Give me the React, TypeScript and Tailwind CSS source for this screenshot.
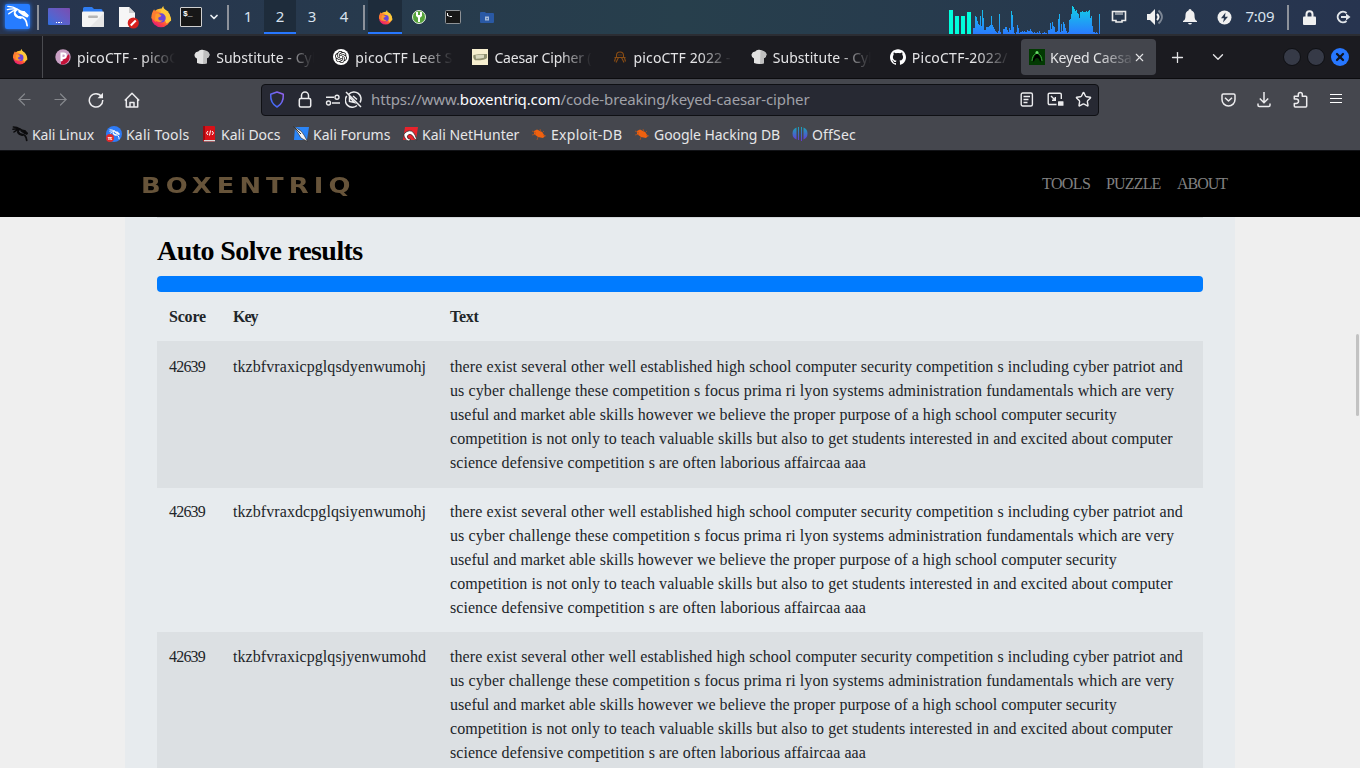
import React, { useLayoutEffect, useRef, useState } from "react";
import { SiGithub, SiOpenai } from "react-icons/si";
import { ArrowLeft, ArrowRight, Star, Plus, ChevronDown, X } from "lucide-react";

/** One line of text whose letter spacing is adjusted so that it spans `w` pixels. */
function Fit({ w, className = "", children }: { w: number; className?: string; children: React.ReactNode }) {
  const ref = useRef<HTMLSpanElement>(null);
  const [ls, setLs] = useState(0);
  useLayoutEffect(() => {
    const el = ref.current;
    if (!el) return;
    const n = (el.textContent || "").length;
    setLs((w - el.offsetWidth) / n);
  }, [w]);
  return (
    <span className="block overflow-visible" style={{ width: w }}>
      <span ref={ref} className={"inline-block whitespace-nowrap " + className} style={{ letterSpacing: ls }}>
        {children}
      </span>
    </span>
  );
}

const Firefox = ({ size }: { size: number }) => (
  <svg width={size} height={size} viewBox="0 0 24 24">
    <defs>
      <linearGradient id="fx" x1="0.85" y1="0.05" x2="0.2" y2="0.95">
        <stop offset="0" stopColor="#ffe940" />
        <stop offset="0.4" stopColor="#ff9a2c" />
        <stop offset="0.7" stopColor="#ff4a3d" />
        <stop offset="1" stopColor="#e3187c" />
      </linearGradient>
    </defs>
    <circle cx="12" cy="13" r="10.2" fill="url(#fx)" />
    <path d="M14.5 0c0 3 2.500 4 4.500 6.500S23.500 12 23 16l-5 3-6-12c0-3 1-5.500 2.500-7z" fill="#ffc83a" />
    <path d="M4.500 3.500C5 6 7 6 10 6.500l3 5-7 6L1.500 13c0-4 1-6.500 3-9.500z" fill="#ff7c30" />
    <circle cx="12.200" cy="13" r="5" fill="#6b45d8" />
    <path d="M6 9c2-1.500 4-.5 6.500 1.500-1 1.500-3 1.200-3.500 2.500-.4 2 2 3.500 5 2.500-2 3-7 2.500-8.500-1z" fill="#ff9a2c" />
  </svg>
);

const Dragon = ({ size, color, weight = 1.5 }: { size: number; color: string; weight?: number }) => (
  <svg width={size} height={size} viewBox="0 0 25 25" fill="none" stroke={color} strokeWidth={weight} strokeLinecap="round" strokeLinejoin="round">
    <path d="M2 1.500Q8 1.500 12 4.500T20 7.500M1.500 5Q7 3.500 12 4.800M3 9.500Q7 6 12 5" />
    <path d="M12 4.800C7.500 8 9 13 15 13s7.500 4 8 9.500" strokeWidth={weight * 1.25} />
    <path d="M14 7.200L20 7.500 24 11.500l-1 1.300-4-1.800z" fill={color} />
    <path d="M10 10q2 3.500 6 4" strokeWidth={weight * 1.5} />
  </svg>
);

const Cell = ({ className, children }: { className: string; children?: React.ReactNode }) => (
  <div className={"flex h-full shrink-0 items-center justify-center " + className}>{children}</div>
);
const Sep = () => <div className="h-[25px] w-[2px] bg-[#8d929b]" />;

const bars = [
  6, 6, 18, 17, 13, 10, 9, 18, 8, 24, 16, 4, 4, 7, 7, 7, 8, 9, 18, 9, 7, 5, 3, 2, 1, 3, 20, 2, 0, 0, 5, 5, 7, 7, 4, 2,
  6, 4, 23, 19, 7, 1, 0, 2, 9, 6, 1, 2, 2, 3, 2, 3, 2, 2, 4, 3, 3, 5, 3, 2, 1, 2, 1, 1, 2, 1, 3, 1, 0, 1, 1, 2, 1, 1, 0, 4, 4,
];
const busy = [
  11, 5, 12, 8, 7, 2, 2, 3, 15, 20, 2, 10, 3, 12, 10, 6, 3, 1, 2, 14, 15, 20, 28, 27, 25, 23, 24, 21, 20, 16, 22, 22, 23,
  22, 22, 22, 23, 22, 23, 24, 16, 18, 8, 2, 2, 1, 2, 1, 0, 20, 0,
];

function Monitor() {
  return (
    <svg width="152" height="34" viewBox="0 0 152 34" shapeRendering="crispEdges">
      <defs>
        <linearGradient id="mon" gradientUnits="userSpaceOnUse" x1="0" y1="34" x2="0" y2="6">
          <stop offset="0" stopColor="#2a7bff" />
          <stop offset="1" stopColor="#12d0e6" />
        </linearGradient>
      </defs>
      <g fill="#00ffdc">
        <rect x="0" y="10" width="4" height="24" />
        <rect x="6" y="16" width="4" height="18" />
        <rect x="12" y="16" width="4" height="18" />
        <rect x="18" y="12" width="4" height="22" />
      </g>
      <g fill="url(#mon)">
        <path d={bars.map((h, i) => `M${24 + i} 34v${-h}h1v${h}z`).join("") + busy.map((h, i) => `M${101 + i} 34v${-h}h1v${h}z`).join("")} />
      </g>
    </svg>
  );
}

function Panel() {
  return (
    <div className="flex h-[34px] items-center bg-linear-to-r from-[#27344e] via-[#273f4c] to-[#27344f] text-[15px] text-[#d8e2ee]">
      <Cell className="w-[34px] pb-px">
        <div className="flex size-[25px] items-center justify-center rounded-[2px] bg-[#267cff] shadow-[0_0_4px_#267cff]">
          <Dragon size={23} color="#fff" />
        </div>
      </Cell>
      <Cell className="w-2"><Sep /></Cell>
      <Cell className="w-[34px] pb-px">
        <div className="flex h-[17px] w-[22px] items-end justify-center gap-px rounded-[1px] bg-linear-to-tr from-[#2b6fe0] to-[#7a4cb0] pb-[2px]">
          <i className="size-[1.5px] bg-white" /><i className="size-[1.5px] bg-white" /><i className="size-[1.5px] bg-white" />
        </div>
      </Cell>
      <Cell className="w-[34px]">
        <svg width="22" height="20" viewBox="0 0 22 20">
          <path d="M1 7V1.500Q1 0 2.500 0H10l2 2h7q1.500 0 1.500 1.500V7z" fill="#2f7cf0" />
          <rect y="4.500" width="22" height="15.500" rx="1" fill="#f4f4f4" />
          <path d="M8 20L22 6v13q0 1-1 1z" fill="#e6e6e6" />
          <rect x="6" y="8.500" width="10" height="2.500" rx="1.200" fill="#b5b5b5" />
        </svg>
      </Cell>
      <Cell className="w-[34px]">
        <svg width="21" height="23" viewBox="0 0 21 23" className="ml-[2px]">
          <path d="M1 1h10l6 6v14H1z" fill="#f6f6f6" />
          <path d="M11 1v6h6z" fill="#cfcfcf" />
          <circle cx="15.300" cy="17" r="5.600" fill="#d7201d" />
          <path d="M12.800 19.500l5-5" stroke="#fff" strokeWidth="2" />
        </svg>
      </Cell>
      <Cell className="w-[34px]"><Firefox size={22} /></Cell>
      <Cell className="w-[26px]">
        <div className="h-[20px] w-[22px] rounded-[1px] border border-[#d0d0d0] bg-[#171717] pl-[2px] font-['Liberation_Mono'] text-[8px] leading-[11px] font-bold text-white">$_</div>
      </Cell>
      <Cell className="w-5"><ChevronDown size={12} strokeWidth={3.5} color="#e9edf2" /></Cell>
      <Cell className="w-2"><Sep /></Cell>
      <Cell className="w-8 pb-[2px]">1</Cell>
      <Cell className="w-8 border-b-2 border-[#2777ff] bg-[#1e2c3b]">2</Cell>
      <Cell className="w-8 pb-[2px]">3</Cell>
      <Cell className="w-8 pb-[2px]">4</Cell>
      <Cell className="w-2"><Sep /></Cell>
      <Cell className="w-[34px] border-b-2 border-[#2777ff] bg-[#1e2c3b] pt-[2px]"><Firefox size={15} /></Cell>
      <Cell className="w-[34px]">
        <svg width="14" height="14" viewBox="0 0 14 14">
          <circle cx="7" cy="7" r="6.500" fill="#56a43a" stroke="#e6efe2" />
          <path d="M4 2h2v3h2V2h2v4L8 7.800V12H6V7.800L4 6z" fill="#fff" />
        </svg>
      </Cell>
      <Cell className="w-[34px]">
        <svg width="16" height="14" viewBox="0 0 16 14">
          <rect x=".5" y=".5" width="15" height="13" rx="1" fill="#171717" stroke="#8e9296" />
          <path d="M2.500 3v3M3 5.500l1.500 1M5 6.500h2" stroke="#fff" />
        </svg>
      </Cell>
      <Cell className="w-[34px]">
        <svg width="14" height="11" viewBox="0 0 14 11">
          <path d="M0 1Q0 0 1 0h4l1 1h7q1 0 1 1v8q0 1-1 1H1q-1 0-1-1z" fill="#2a59a4" />
          <rect x="5" y="4.500" width="4" height="4" fill="#a8bcd8" />
          <rect x="6.500" y="6" width="1.200" height="1.200" fill="#2a59a4" />
        </svg>
      </Cell>
      <div className="flex-1" />
      <Monitor />
      <Cell className="w-9">
        <svg width="16" height="14" viewBox="0 0 16 14" fill="none" stroke="#ececec" strokeWidth="1.600">
          <path d="M1.500 1.500h13v9h-3.500v1.500H5v-1.500H1.500z" />
          <path d="M5 2v3M7 2v3M9 2v3M11 2v3" strokeWidth="1" />
        </svg>
      </Cell>
      <Cell className="w-9">
        <svg width="18" height="18" viewBox="0 0 18 18">
          <path d="M1 6h3l5-5v16l-5-5H1z" fill="#f0f0f0" />
          <path d="M11 6q3 3 0 6" stroke="#f0f0f0" strokeWidth="2" fill="none" />
          <path d="M12.500 2.500q7 6.500 0 13" stroke="#7d8795" strokeWidth="1.800" fill="none" />
        </svg>
      </Cell>
      <Cell className="w-[34px]">
        <svg width="14" height="16" viewBox="0 0 14 16" fill="#f0f0f0">
          <path d="M7 0q1.500 0 1.500 1.500Q11.500 2.500 11.500 6c0 3.500.5 5 2.500 6v1H0v-1c2-1 2.500-2.500 2.500-6Q2.500 2.500 5.500 1.500 5.500 0 7 0z" />
          <path d="M5 14h4q-.5 1.500-2 1.500T5 14z" />
        </svg>
      </Cell>
      <Cell className="w-[34px]">
        <svg width="15" height="15" viewBox="0 0 15 15">
          <circle cx="7.500" cy="7.500" r="7" fill="#f0f0f0" />
          <path d="M8.500 2.500L4 8.200h3L6 12.500l5-5.800H8z" fill="#27364e" />
        </svg>
      </Cell>
      <Cell className="w-[38px] pb-[2px]"><Fit w={29}>7:09</Fit></Cell>
      <Cell className="w-[18px]"><Sep /></Cell>
      <Cell className="w-6">
        <svg width="13" height="15" viewBox="0 0 13 15">
          <path d="M3.500 7V4.200a3 3 0 0 1 6 0V7" fill="none" stroke="#f0f0f0" strokeWidth="2" />
          <rect y="6.500" width="13" height="8.500" rx="1" fill="#f0f0f0" />
        </svg>
      </Cell>
      <Cell className="ml-[5px] w-[34px]">
        <svg width="15" height="14" viewBox="0 0 15 14" fill="none" stroke="#e2e6ea" strokeWidth="2">
          <path d="M10.500 3a5.300 5.300 0 1 0 0 8" />
          <path d="M5 7h6" />
          <path d="M10 3.500L14.500 7 10 10.500z" fill="#e2e6ea" stroke="none" />
        </svg>
      </Cell>
    </div>
  );
}

const Chef = () => (
  <svg width="16" height="16" viewBox="0 0 16 16">
    <path d="M3 14V9.500Q.3 8.500.5 5.500 1.500 2.500 4.200 2.600 5.500.5 8 .7q2.500-.2 3.700 2 3-.2 3.800 2.500.2 3-2.700 4v5q-4.800 1.500-9.800-.2z" fill="#e2e2e2" />
    <path d="M9.500 1.200q5 .3 6 3.800 0 3-2.500 4.200v5l-4 .8z" fill="#bfbfbf" />
  </svg>
);

const tabs = [
  {
    label: "picoCTF - picoCTF", w: 116, icon: (
      <svg width="16" height="16" viewBox="0 0 16 16">
        <circle cx="8" cy="8" r="7.700" fill="#c9a0c4" />
        <path d="M6 13l8-8a7.700 7.700 0 0 1-8 10.500z" fill="#c41237" />
        <path d="M6.500 12V4.500h2a2.300 2.300 0 0 1 0 4.600h-2" fill="none" stroke="#fff" strokeWidth="2" />
      </svg>
    ),
  },
  { label: "Substitute - Cyber", w: 118, icon: <Chef /> },
  {
    label: "picoCTF Leet S", w: 97, icon: (
      <div className="flex size-4 items-center justify-center rounded-full bg-white"><SiOpenai size={12} color="#111" /></div>
    ),
  },
  {
    label: "Caesar Cipher (", w: 97, icon: (
      <svg width="16" height="16" viewBox="0 0 16 16">
        <rect width="16" height="16" fill="#f7efcf" />
        <path d="M1.500 6q7-1.500 13.500-1v4q-2 2.500-12 2.300Q.5 9 1.500 6z" fill="#8f9070" />
        <path d="M3.500 6.300q4-1 8.500-.5v3q-4 1-8 1z" fill="#d8d7bd" />
      </svg>
    ),
  },
  {
    label: "picoCTF 2022 -", w: 97, icon: (
      <svg width="16" height="16" viewBox="0 0 16 16" fill="none" stroke="#8a4d14" strokeWidth="1.100">
        <path d="M4.500 8.500V6.500a3.500 3.500 0 0 1 7 0v2M2.500 8.500h11M6.500 8.500l-2.500 5M9.500 8.500l2.500 5M3.500 9l-1 3.500M12.500 9l1 3.500M6.500 6h1M8.500 6h1" />
      </svg>
    ),
  },
  { label: "Substitute - Cyber", w: 118, icon: <Chef /> },
  { label: "PicoCTF-2022/", w: 96, icon: <SiGithub size={16} color="#fff" /> },
];

function TabBar() {
  return (
    <div className="flex h-[45px] items-center border-t-2 border-b border-t-[#2b2d33] border-b-[#0c0c0f] bg-[#1b1b20] text-[14px] text-[#e4e4e6]">
      <div className="flex h-full w-[43px] items-center border-r border-[#4a4b50] pl-3"><Firefox size={16} /></div>
      <div className="w-1" />
      {tabs.map((t, i) => (
        <div key={i} className="flex h-full w-[139.15px] shrink-0 items-center gap-[6px] pl-2">
          {t.icon}
          <div className="w-[99px] overflow-hidden mask-[linear-gradient(to_right,#000_66%,transparent_99%)]">
            <Fit w={t.w}>{t.label}</Fit>
          </div>
        </div>
      ))}
      <div className="flex h-9 w-[135px] shrink-0 items-center rounded-[4px] bg-[#43454c] pl-2">
        <svg width="16" height="16" viewBox="0 0 16 16">
          <rect width="16" height="16" fill="#023a02" />
          <path d="M8 3L3 12l2 .5L6 10q2-2 4 0l1 2.500 2-.5z" fill="#000" />
          <path d="M7 4.500Q3.500 6 3 12M9 4.500q3.500 1.500 4 7.500" stroke="#3fae3f" fill="none" />
          <circle cx="8" cy="3.500" r="1.500" fill="#68e068" />
        </svg>
        <div className="ml-[5px] w-[81px] overflow-hidden mask-[linear-gradient(to_right,#000_60%,transparent_105%)]">
          <Fit w={88}>Keyed Caesar</Fit>
        </div>
        <X size={13} strokeWidth={2} className="ml-[2px]" />
      </div>
      <Cell className="w-11"><Plus size={17} strokeWidth={1.8} /></Cell>
      <Cell className="w-9"><ChevronDown size={18} strokeWidth={1.8} /></Cell>
      <div className="flex-1" />
      <div className="mr-[11px] flex items-center gap-[6px]">
        <div className="size-[18px] rounded-full border border-[#0e0f13] bg-[#363a47]" />
        <div className="size-[18px] rounded-full border border-[#0e0f13] bg-[#363a47]" />
        <div className="flex size-[18px] items-center justify-center rounded-full bg-[#2777ff]"><X size={12} strokeWidth={4.5} color="#10141f" /></div>
      </div>
    </div>
  );
}

function Toolbar() {
  return (
    <div className="flex h-[41px] items-center text-[#ececee]">
      <Cell className="ml-[6px] w-9"><ArrowLeft size={19} strokeWidth={1.5} color="#85878c" /></Cell>
      <Cell className="w-9"><ArrowRight size={19} strokeWidth={1.5} color="#85878c" /></Cell>
      <Cell className="w-9">
        <svg width="16" height="16" viewBox="0 0 16 16" fill="none" stroke="currentColor" strokeWidth="1.500">
          <path d="M13.500 4.500A6.700 6.700 0 1 0 14.700 8" />
          <path d="M15 .8V6.300H9.500z" fill="currentColor" stroke="none" />
        </svg>
      </Cell>
      <Cell className="w-[35px]">
        <svg width="16" height="16" viewBox="0 0 16 16" fill="none" stroke="currentColor" strokeWidth="1.500" strokeLinejoin="round">
          <path d="M.8 8.500L8 1.300l7.200 7.200M2.300 7.500V15h11.400V7.500" />
          <path d="M6 15v-4.500h4V15" />
        </svg>
      </Cell>
      <div className="ml-[112px] flex h-8 w-[838px] shrink-0 items-center rounded-[4px] border border-[#0f1014] bg-[#272933]">
        <Cell className="w-[30px]">
          <svg width="16" height="17" viewBox="0 0 16 17" fill="none" strokeWidth="1.500">
            <defs><linearGradient id="sh" x1="1" y1="0" x2="0" y2="1"><stop stopColor="#9a62f0" /><stop offset="1" stopColor="#2f6bf5" /></linearGradient></defs>
            <path d="M8 1l6.300 2.300q.5 9-6.300 12.700Q1.200 12.300 1.700 3.300z" stroke="url(#sh)" strokeLinejoin="round" />
          </svg>
        </Cell>
        <Cell className="w-[26px]">
          <svg width="14" height="17" viewBox="0 0 14 17" fill="none" stroke="currentColor" strokeWidth="1.500">
            <rect x="1.300" y="7.500" width="11.400" height="8.500" rx="1.500" />
            <path d="M3.500 7.500V4.500a3.500 3.500 0 0 1 7 0v3" />
          </svg>
        </Cell>
        <Cell className="w-[29px]">
          <svg width="16" height="12" viewBox="0 0 16 12" fill="none" stroke="currentColor" strokeWidth="1.400">
            <path d="M1 3.200h8M7 9h8" /><circle cx="12" cy="3.200" r="2" /><circle cx="3.500" cy="9" r="2" />
          </svg>
        </Cell>
        <Cell className="w-[13px]">
          <svg width="17" height="17" viewBox="0 0 17 17" fill="none" stroke="currentColor" strokeWidth="1.500" className="shrink-0">
            <path d="M4 3a7 7 0 0 1 11 8.500M1.800 5A7 7 0 0 0 12 14.500M1 1l15 15" />
            <path d="M4.500 6l5 5.500-5-1zM8 5l4 3.500" />
          </svg>
        </Cell>
        <div className="ml-[11px] text-[15px] text-[#a0a1a8]">
          <Fit w={438}>https://www.<span className="text-[#fbfbfe]">boxentriq.com</span>/code-breaking/keyed-caesar-cipher</Fit>
        </div>
        <div className="flex-1" />
        <Cell className="w-7">
          <svg width="14" height="15" viewBox="0 0 14 15" fill="none" stroke="currentColor" strokeWidth="1.400">
            <rect x="1.200" y="1" width="11.200" height="13" rx="1.500" /><path d="M3.500 4.500h6.500M3.500 7.500h5M3.500 10.500h4" />
          </svg>
        </Cell>
        <Cell className="w-7">
          <svg width="17" height="15" viewBox="0 0 17 15" fill="none" stroke="currentColor" strokeWidth="1.400">
            <path d="M9.500 12.500H2.500q-1.300 0-1.300-1.300V2.500q0-1.300 1.300-1.300h10.500q1.300 0 1.300 1.300V7M4 4l4 4M8.300 5v3.300H5" />
            <rect x="11" y="9.300" width="5.500" height="4.500" rx=".5" fill="currentColor" stroke="none" />
          </svg>
        </Cell>
        <Cell className="w-7"><Star size={17} strokeWidth={2} /></Cell>
        <div className="w-px" />
      </div>
      <div className="flex-1" />
      <Cell className="w-9">
        <svg width="15" height="14" viewBox="0 0 15 14" fill="none" stroke="currentColor" strokeWidth="1.500" strokeLinejoin="round">
          <path d="M2.300 1h10.400q1.300 0 1.300 1.300v4.200a6.500 6.500 0 0 1-13 0V2.300Q1 1 2.300 1z" /><path d="M4 4.800L7.500 8 11 4.800" />
        </svg>
      </Cell>
      <Cell className="w-9">
        <svg width="14" height="16" viewBox="0 0 14 16" fill="none" stroke="currentColor" strokeWidth="1.500">
          <path d="M7 0v10.500M2.800 6.500L7 10.700l4.200-4.200M1 11.500v1.800Q1 14.500 2.300 14.500h9.400q1.300 0 1.300-1.200v-1.800" />
        </svg>
      </Cell>
      <Cell className="w-9">
        <svg width="15" height="17" viewBox="0 0 15 17" fill="none" stroke="currentColor" strokeWidth="1.500" strokeLinejoin="round">
          <path d="M1.300 8V5.200h4V3.500a2 2 0 0 1 4 0v1.700h3.500q.9 0 .9.900V15q0 .9-.9.900H2.200q-.9 0-.9-.9v-2.500h2a2.200 2.200 0 0 0 0-4.500z" />
        </svg>
      </Cell>
      <Cell className="mr-[6px] w-9">
        <div className="flex w-3 flex-col gap-[3px] pb-[2px]"><i className="h-px bg-white" /><i className="h-px bg-white" /><i className="h-px bg-white" /></div>
      </Cell>
    </div>
  );
}

const Bug = () => (
  <svg width="16" height="16" viewBox="0 0 16 16">
    <path d="M3 5l3-1.500 5 2.500 3 4-2 2-5-1L3 8z" fill="#f0610f" />
    <path d="M1 5l4 2M1 9l4-1M6 14l1-3M9 3l1 3M13 5l-2 2M15 10l-3-1" stroke="#b5531c" strokeWidth=".8" />
  </svg>
);

const marks = [
  { w: 62, label: "Kali Linux", icon: <Dragon size={16} color="#0c0c0e" weight={2.2} /> },
  {
    w: 63, label: "Kali Tools", icon: (
      <div className="relative flex size-4 items-center justify-center rounded-full bg-[#2e7bf6]">
        <Dragon size={11} color="#fff" weight={1.8} />
        <div className="absolute bottom-0 left-0 size-2 rounded-full bg-[#e22b2b] text-center text-[6px] leading-2 font-bold text-white">π</div>
      </div>
    ),
  },
  {
    w: 60, label: "Kali Docs", icon: (
      <svg width="16" height="16" viewBox="0 0 16 16">
        <rect x="2" y="0" width="12" height="15.500" rx="1" fill="#d81118" /><rect x="2" width="2" height="14" fill="#9d0a10" />
        <rect x="3" y="14" width="11" height="1.300" fill="#ddd" />
        <path d="M7 5L5.500 7 7 9M11 5l1.500 2L11 9M9.500 4.500l-1 5" stroke="#fff" fill="none" />
      </svg>
    ),
  },
  {
    w: 77, label: "Kali Forums", icon: (
      <svg width="16" height="16" viewBox="0 0 16 16">
        <path d="M2 1h14l-2 13H1z" fill="#2b85f7" />
        <path d="M0 0l8 5 3 4 3.500 6.500L8 12 5 7z" fill="#f5f5f5" stroke="#222" strokeWidth=".6" />
        <path d="M1 1l7 7" stroke="#333" />
      </svg>
    ),
  },
  {
    w: 97, label: "Kali NetHunter", icon: (
      <svg width="16" height="16" viewBox="0 0 16 16">
        <path d="M3 1h13l-2 13H1z" fill="#e8232c" />
        <path d="M3 12q-3-4 2-6.500t8 3.500l2 5-2.500-1Q10 7.500 7 8.500T6 12.500l3 1-2 1.500q-3 0-4-3z" fill="#fff" stroke="#222" strokeWidth=".7" />
      </svg>
    ),
  },
  { w: 71, label: "Exploit-DB", icon: <Bug /> },
  { w: 126, label: "Google Hacking DB", icon: <Bug /> },
  {
    w: 44, label: "OffSec", icon: (
      <svg width="16" height="16" viewBox="0 0 16 16">
        <defs><linearGradient id="of" x1="0" y1="0" x2="0" y2="1"><stop stopColor="#18a6b8" /><stop offset="1" stopColor="#6a32d8" /></linearGradient></defs>
        <path d="M4.500 1.500v12Q.5 12 .5 7.500t4-6zM6 1h1v13H6zM9 1h1v14H9zM11.500 1.500v12q4-1.500 4-6t-4-6z" fill="url(#of)" />
      </svg>
    ),
  },
];

function Bookmarks() {
  return (
    <div className="flex h-[30px] items-center gap-3 pb-[2px] pl-3 text-[14px] text-[#e6e6e8]">
      {marks.map((m) => (
        <div key={m.label} className="flex shrink-0 items-center">
          <div className="flex w-5 shrink-0">{m.icon}</div>
          <Fit w={m.w}>{m.label}</Fit>
        </div>
      ))}
    </div>
  );
}

const lines: [string, number][] = [
  ["there exist several other well established high school computer security competition s including cyber patriot and", 733],
  ["us cyber challenge these competition s focus prima ri lyon systems administration fundamentals which are very", 724],
  ["useful and market able skills however we believe the proper purpose of a high school computer security", 667],
  ["competition is not only to teach valuable skills but also to get students interested in and excited about computer", 723],
  ["science defensive competition s are often laborious affaircaa aaa", 416],
];
const rows = [
  { k: "tkzbfvraxicpglqsdyenwumohj", box: "h-[147px] pt-[14px] bg-[#dce0e3]" },
  { k: "tkzbfvraxdcpglqsiyenwumohj", box: "h-[144px] pt-3" },
  { k: "tkzbfvraxicpglqsjyenwumohd", box: "h-[147px] pt-[13px] bg-[#dce0e3]" },
];

function Page() {
  return (
    <div className="flex min-h-0 flex-1 flex-col bg-[#efefef] font-['Liberation_Serif',serif] text-[#212529]">
      <header className="flex h-[67px] shrink-0 items-center border-t border-[#111216] bg-black pr-[133px] pl-[141px]">
        <div className="origin-left scale-x-[1.2] pt-[3px] font-['DejaVu_Sans',sans-serif] text-[21.5px] leading-none font-bold text-[#67543a]">
          <Fit w={179}>BOXENTRIQ</Fit>
        </div>
        <div className="flex-1" />
        <nav className="flex gap-4 text-[16px] text-[#808080]">
          <Fit w={48}>TOOLS</Fit><Fit w={55}>PUZZLE</Fit><Fit w={50}>ABOUT</Fit>
        </nav>
      </header>
      <main className="ml-[125px] min-h-0 w-[1110px] flex-1 overflow-hidden bg-[#e7ebee] pr-8 pl-8">
        <div className="h-px bg-[#d3d7da]" />
        <h1 className="mt-[16px] h-[34px] text-[28px] leading-[34px] font-bold text-black"><Fit w={206}>Auto Solve results</Fit></h1>
        <div className="mt-2 h-4 rounded-[4px] bg-[#007bff]" />
        <div className="flex h-[49px] pt-[13px] pl-3 text-[16px] leading-6 font-bold">
          <div className="w-16"><Fit w={37}>Score</Fit></div>
          <div className="w-[217px]"><Fit w={25}>Key</Fit></div>
          <Fit w={29}>Text</Fit>
        </div>
        {rows.map(({ k, box }) => (
          <div key={k} className={"flex pl-3 text-[16px] leading-6 " + box}>
            <div className="w-16 shrink-0"><Fit w={36}>42639</Fit></div>
            <div className="w-[217px] shrink-0"><Fit w={193}>{k}</Fit></div>
            <div>{lines.map(([t, w]) => <Fit key={t} w={w}>{t}</Fit>)}</div>
          </div>
        ))}
      </main>
    </div>
  );
}

export default function App() {
  return (
    <div className="relative flex h-[768px] w-[1360px] flex-col overflow-hidden font-['Noto_Sans',sans-serif]">
      <Panel />
      <TabBar />
      <div className="bg-[#45474e]"><Toolbar /><Bookmarks /></div>
      <Page />
      <div className="absolute top-[334px] left-[1356px] h-[82px] w-[3px] rounded-full bg-[#c2c2c2]" />
    </div>
  );
}
